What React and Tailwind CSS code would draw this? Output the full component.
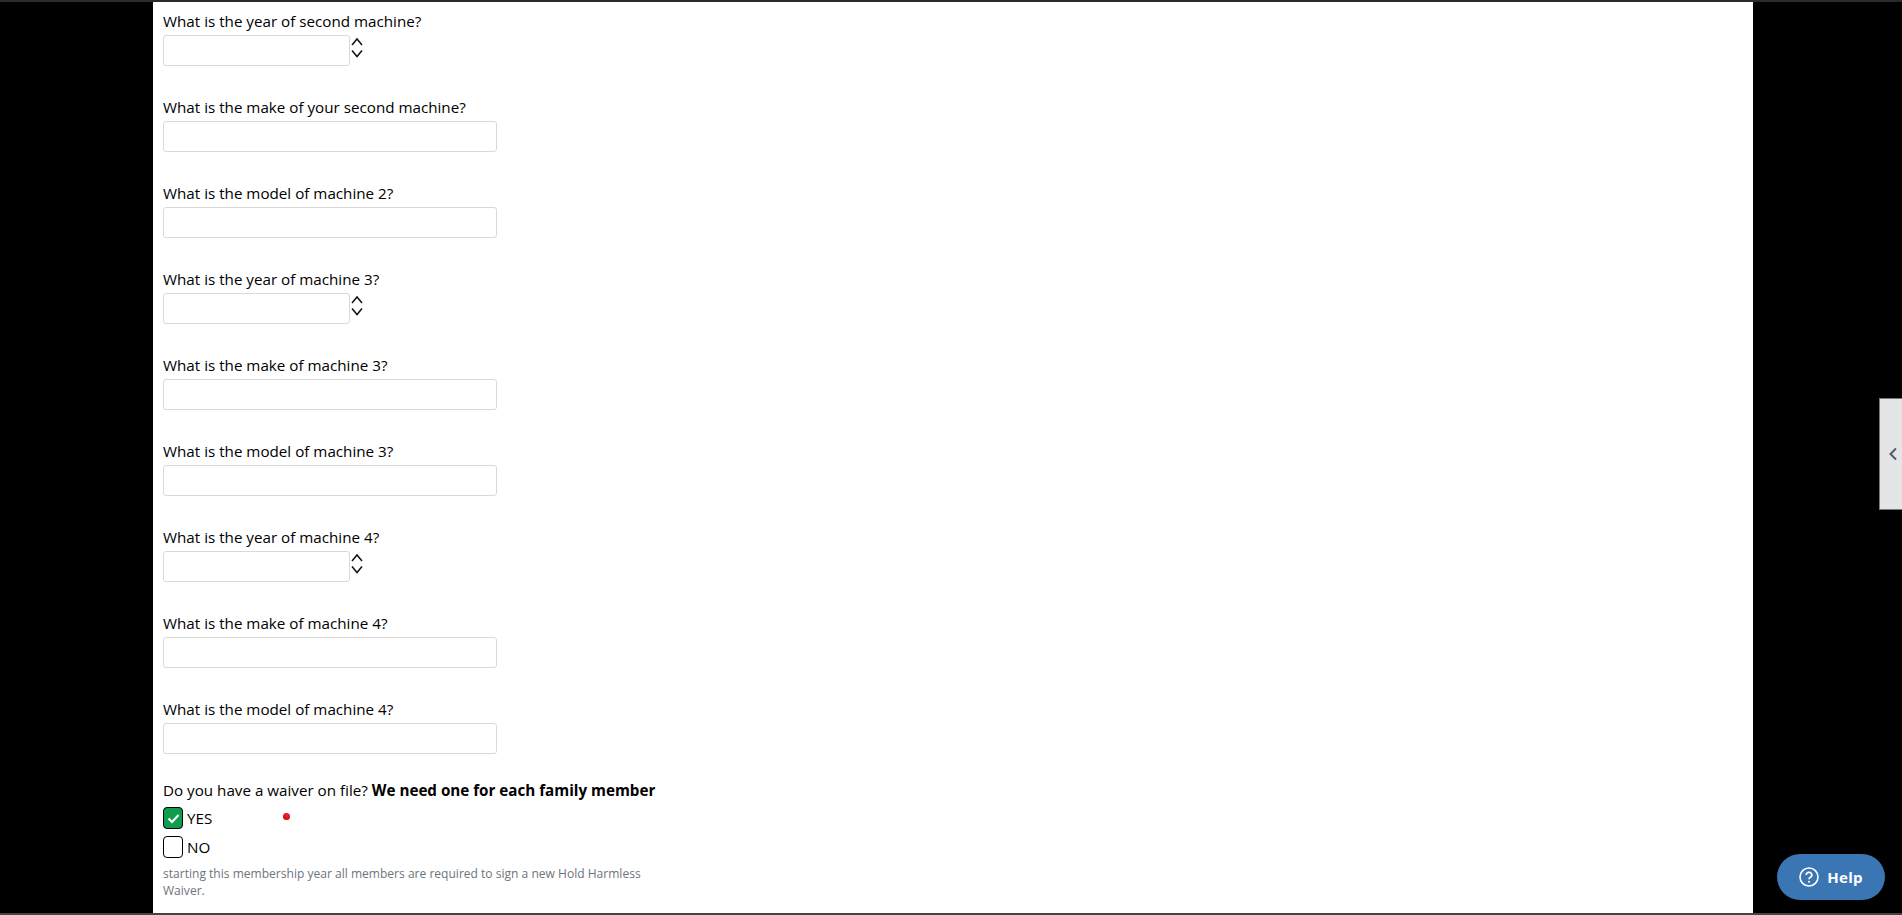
function Spinner() {
  return (
    <svg className="ml-[1px] self-start" width="12" height="24" viewBox="0 0 12 24" fill="none" stroke="#111" strokeWidth="1.5">
      <path d="M1 10 L6 4 L11 10" />
      <path d="M1 15.5 L6 21.5 L11 15.5" />
    </svg>
  );
}

function Field({ label, number }) {
  return (
    <div className="h-[86px]">
      <div className="h-[21px] text-[15.2px] leading-[18px] text-black mb-[2px]">{label}</div>
      {number ? (
        <div className="flex">
          <div className="w-[187px] h-[31px] bg-white border border-[#d9d9d9] rounded-[3px]" />
          <Spinner />
        </div>
      ) : (
        <div className="w-[334px] h-[31px] bg-white border border-[#d9d9d9] rounded-[3px]" />
      )}
    </div>
  );
}

function Check({ checked, label }) {
  return (
    <div className="flex items-center h-[22px] mb-[7px]">
      <div className={"w-[20px] h-[22px] rounded-[4px] border border-black flex items-center justify-center " + (checked ? "bg-[#0f9d4d]" : "bg-white")}>
        {checked && (
          <svg width="13" height="11" viewBox="0 0 13 11" fill="none" stroke="#fff" strokeWidth="2">
            <path d="M1.5 5.5 L5 9 L11.5 2" />
          </svg>
        )}
      </div>
      <span className="ml-[4px] text-[15.2px] text-black">{label}</span>
    </div>
  );
}

const rows = [
  ["What is the year of second machine?", true],
  ["What is the make of your second machine?", false],
  ["What is the model of machine 2?", false],
  ["What is the year of machine 3?", true],
  ["What is the make of machine 3?", false],
  ["What is the model of machine 3?", false],
  ["What is the year of machine 4?", true],
  ["What is the make of machine 4?", false],
  ["What is the model of machine 4?", false],
];

export default function App() {
  return (
    <div className="h-[915px] w-[1902px] bg-black overflow-hidden relative font-['Open_Sans','Noto_Sans',sans-serif] flex flex-col">
      <div className="h-[2px] bg-[#2b2b2b] shrink-0" />
      <div className="ml-[153px] w-[1600px] flex-1 bg-white pl-[10px] pt-[10px]">
        {rows.map(([l, n]) => <Field key={l} label={l} number={n} />)}
        <div className="relative w-[500px] -mt-[6px]">
          <div className="h-[21px] text-[15.2px] leading-[20px] text-black mb-[6px] whitespace-nowrap">
            Do you have a waiver on file? <b>We need one for each family member</b>
          </div>
          <Check checked label="YES" />
          <Check label="NO" />
          <div className="absolute left-[120px] top-[33px] w-[7px] h-[7px] rounded-full bg-[radial-gradient(circle_at_60%_35%,#ff2030,#b80000)]" />
          <div className="w-[490px] text-[12.05px] leading-[17px] text-[#6c757d]">
            starting this membership year all members are required to sign a new Hold Harmless Waiver.
          </div>
        </div>
      </div>
      <div className="h-[2px] bg-[#444] shrink-0" />
      <div className="absolute right-0 top-[398px] w-[23px] h-[112px] pl-[3px] bg-[#e4e5e7] border border-r-0 border-[#777] flex items-center justify-center">
        <svg width="10" height="14" viewBox="0 0 10 14" fill="none" stroke="#555b66" strokeWidth="2">
          <path d="M8 1.5 L2.5 7 L8 12.5" />
        </svg>
      </div>
      <div className="absolute left-[1777px] top-[854px] w-[108px] h-[46px] rounded-full bg-[#3b76b4] flex items-center justify-center gap-[8px] text-white font-bold text-[15px] tracking-[0.3px]">
        <svg width="20" height="20" viewBox="0 0 20 20" fill="none" stroke="#fff">
          <circle cx="10" cy="10" r="9" strokeWidth="1.6" />
          <path d="M7.2 8 a2.8 2.6 0 1 1 4.2 2.2 c-1 .6 -1.4 1 -1.4 2" strokeWidth="1.7" />
          <circle cx="10" cy="14.8" r="1" fill="#fff" stroke="none" />
        </svg>
        <span>Help</span>
      </div>
    </div>
  );
}
